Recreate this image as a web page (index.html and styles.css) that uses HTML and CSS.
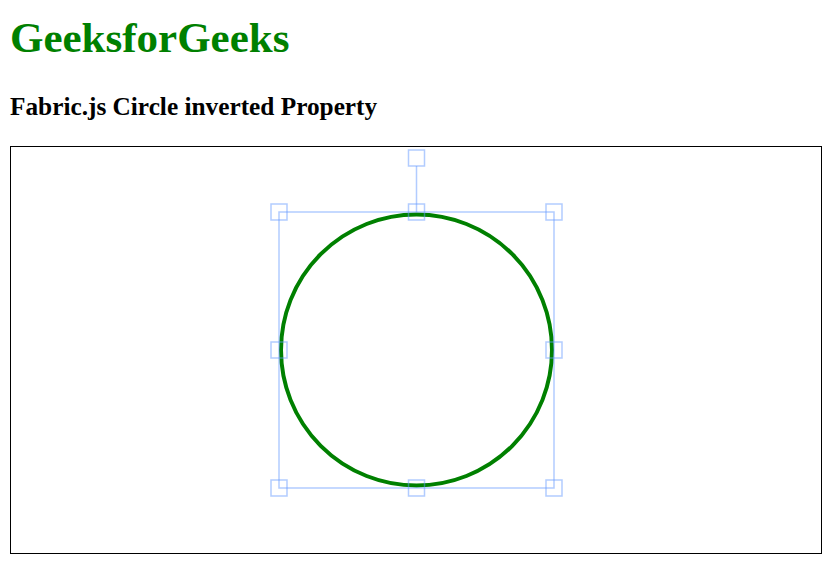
FILE: index.html
```html
<!DOCTYPE html>
<html>
<head>
<meta charset="utf-8">
<link rel="stylesheet" href="styles.css">
</head>
<body>
<div class="page">
  <h1 class="title">GeeksforGeeks</h1>
  <h2 class="subtitle">Fabric.js Circle inverted Property</h2>
  <div class="canvas">
    <svg class="scene" width="810" height="406" viewBox="0 0 810 406">
      <circle cx="405.5" cy="203" r="135.5" fill="none" stroke="#008000" stroke-width="4"/>
      <g fill="none" stroke="rgba(102,153,255,0.5)" stroke-width="1.5">
        <rect x="268" y="65" width="275" height="276"/>
        <line x1="405.5" y1="65" x2="405.5" y2="19"/>
        <rect x="260" y="57" width="16" height="16"/>
        <rect x="535" y="57" width="16" height="16"/>
        <rect x="260" y="333" width="16" height="16"/>
        <rect x="535" y="333" width="16" height="16"/>
        <rect x="397.5" y="57" width="16" height="16"/>
        <rect x="397.5" y="333" width="16" height="16"/>
        <rect x="260" y="195" width="16" height="16"/>
        <rect x="535" y="195" width="16" height="16"/>
        <rect x="397.5" y="3" width="16" height="16"/>
      </g>
    </svg>
  </div>
</div>
</body>
</html>
```

FILE: styles.css
```css
html, body {
  margin: 0;
  padding: 0;
  background: #ffffff;
}

.page {
  padding: 0 10px;
  font-family: "Liberation Serif", "Times New Roman", serif;
}

.title {
  margin: 13px 0 0;
  font-size: 43px;
  line-height: 50px;
  font-weight: bold;
  color: #008000;
}

.subtitle {
  margin: 29px 0 0;
  font-size: 25.3px;
  line-height: 29px;
  font-weight: bold;
  color: #000000;
}

.canvas {
  margin-top: 25px;
  width: 810px;
  height: 406px;
  border: 1px solid #000000;
}

.scene {
  display: block;
}
```
